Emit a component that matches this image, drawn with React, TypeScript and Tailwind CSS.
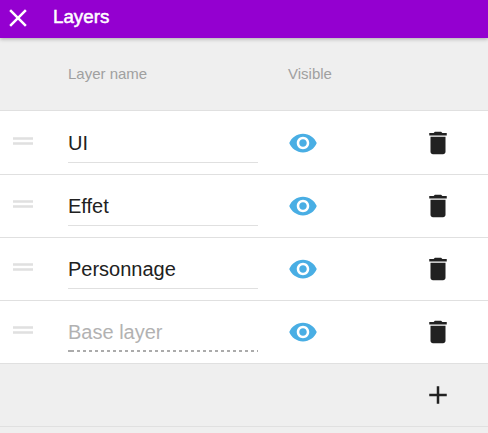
import React from "react";

type Layer = { name: string; base?: boolean };

const layers: Layer[] = [
  { name: "UI" },
  { name: "Effet" },
  { name: "Personnage" },
  { name: "Base layer", base: true },
];

const icons = {
  close:
    "M19 6.41L17.59 5 12 10.59 6.41 5 5 6.41 10.59 12 5 17.59 6.41 19 12 13.41 17.59 19 19 17.59 13.41 12z",
  handle: "M20 9H4v2h16V9zM4 15h16v-2H4v2z",
  eye: "M12 4.5C7 4.5 2.73 7.61 1 12c1.73 4.39 6 7.5 11 7.5s9.27-3.11 11-7.5c-1.73-4.39-6-7.5-11-7.5zM12 17c-2.76 0-5-2.24-5-5s2.24-5 5-5 5 2.24 5 5-2.24 5-5 5zm0-8c-1.66 0-3 1.34-3 3s1.34 3 3 3 3-1.34 3-3-1.34-3-3-3z",
  trash: "M6 19c0 1.1.9 2 2 2h8c1.1 0 2-.9 2-2V7H6v12zM19 4h-3.5l-1-1h-5l-1 1H5v2h14V4z",
  plus: "M19 13h-6v6h-2v-6H5v-2h6V5h2v6h6v2z",
};

function Icon({ name, className = "" }: { name: keyof typeof icons; className?: string }) {
  return (
    <svg viewBox="0 0 24 24" className={`block size-[30px] shrink-0 ${className}`} fill="currentColor">
      <path d={icons[name]} />
    </svg>
  );
}

function LayerRow({ layer }: { layer: Layer }) {
  return (
    <li className="flex h-[63px] border-b border-[#e0e0e0] bg-white first:h-16 first:pt-px">
      <Icon name="handle" className="ml-2 mt-[14px] text-[#e0e0e0]" />
      <div className="ml-[30px] w-[190px] pt-[18px]">
        <div
          className={`h-[33px] text-xl leading-[26px] ${
            layer.base ? "text-[#b2b2b2]" : "border-b border-[#e0e0e0] text-[#212121]"
          }`}
        >
          {layer.name}
          {layer.base && (
            <svg className="mt-[5px] block h-[2px] w-[190px]" viewBox="0 0 190 2">
              <path d="M0 1h6" stroke="#ababab" strokeWidth="2" />
              <path d="M9 1h181" stroke="#ababab" strokeWidth="2" strokeDasharray="3 3" />
            </svg>
          )}
        </div>
      </div>
      <button aria-label="Toggle visibility" className="ml-[30px] mt-4 h-[30px] text-[#49aee4]">
        <Icon name="eye" />
      </button>
      <button aria-label="Delete layer" className="ml-[105px] mt-4 h-[30px] text-[#212121]">
        <Icon name="trash" />
      </button>
    </li>
  );
}

export default function App() {
  return (
    <div className="flex h-[433px] w-[488px] flex-col overflow-hidden bg-[#efefef] font-['Liberation_Sans',Arial,sans-serif]">
      <header className="z-10 flex h-[38px] shrink-0 bg-[#9400d0] text-white shadow-[0_1px_4px_rgba(0,0,0,0.3)]">
        <button aria-label="Close" className="ml-[3px] mt-[3px] h-[30px]">
          <Icon name="close" />
        </button>
        <h1 className="ml-5 mt-[5px] text-[18.75px] leading-6 [-webkit-text-stroke:0.5px_white]">Layers</h1>
      </header>
      <div className="flex h-[73px] shrink-0 items-center border-b border-[#e0e0e0] pl-[68px] text-[15px] leading-5 text-[#a0a0a0]">
        <span className="w-[220px]">Layer name</span>
        <span>Visible</span>
      </div>
      <ul className="shrink-0">
        {layers.map((layer) => (
          <LayerRow key={layer.name} layer={layer} />
        ))}
      </ul>
      <div className="flex h-[63px] shrink-0 border-b border-[#e0e0e0] pl-[423px] pt-4 text-[#212121]">
        <button aria-label="Add layer" className="h-[30px]">
          <Icon name="plus" />
        </button>
      </div>
    </div>
  );
}
